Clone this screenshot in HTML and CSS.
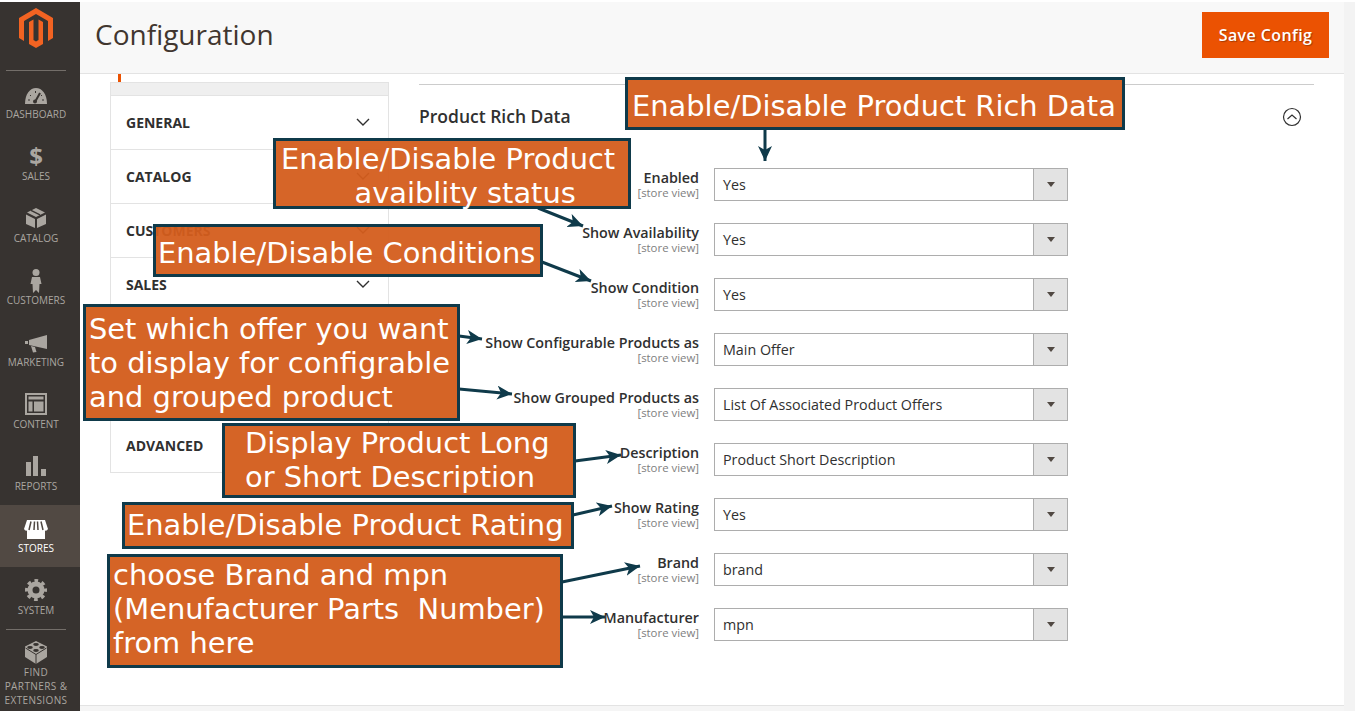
FILE: index.html
```html
<!DOCTYPE html>
<html lang="en">
<head>
<meta charset="utf-8">
<title>Configuration</title>
<link rel="stylesheet" href="styles.css">
</head>
<body>
<div class="page">
  <aside class="sidebar">
    <div class="logo">
      <svg width="36" height="40" viewBox="0 0 36 40"><path fill="#f26322" d="M18 0 35 10V30L30 33V13L18 6 6 13V33L1 30V10Z"/><path fill="#f26322" d="M11 14 15.500 11.500V32L18 33.500 20.500 32V11.500L25 14V36L18 40 11 36Z"/></svg>
    </div>
    <a class="nav-item"><svg class="ico" width="24" height="24" viewBox="0 0 24 24"><path d="M1 21C1 11 6 5 12 5S23 11 23 21Z" fill="currentColor"/><path d="M11 19 16 10" stroke="#373330" stroke-width="2"/><circle cx="11" cy="18.500" r="2" fill="#373330"/><path d="M4 17h2M6 12l1 1M11.500 8v2M18 12l-1 1M20 17h-2" stroke="#373330" stroke-width="1"/></svg><span>Dashboard</span></a>
    <a class="nav-item"><span class="ico dollar">$</span><span>Sales</span></a>
    <a class="nav-item"><svg class="ico" width="24" height="24" viewBox="0 0 24 24"><path d="M12 1 21 5.500 12 10 3 5.500Z" fill="currentColor"/><path d="M7 3.300 16 7.800" stroke="#373330" stroke-width="1.500"/><path d="M2 7.500 11 12V21L2 17ZM22 7.500 13 12V21L22 17Z" fill="currentColor"/></svg><span>Catalog</span></a>
    <a class="nav-item"><svg class="ico" width="24" height="24" viewBox="0 -4 24 24"><circle cx="12" cy="-0.500" r="3.500" fill="currentColor"/><path d="M8 4H16L17.500 11H15.500L15 20 12 17 9 20 8.500 11H6.500Z" fill="currentColor"/></svg><span>Customers</span></a>
    <a class="nav-item"><svg class="ico" width="24" height="24" viewBox="0 0 24 24"><path d="M5 9 23 4V18L5 14Z" fill="currentColor"/><path d="M1 10H4V13H1ZM7 15 11 16 12.500 21 9 21.500Z" fill="currentColor"/></svg><span>Marketing</span></a>
    <a class="nav-item"><svg class="ico" width="24" height="24" viewBox="0 0 24 24"><path fill-rule="evenodd" d="M1 0H23V22H1ZM3 2V20H21V2Z" fill="currentColor"/><path d="M4.500 3.500H19.500V6.500H4.500ZM4.500 8.500H8.500V18.500H4.500ZM10 8.500H19.500V18.500H10Z" fill="currentColor"/></svg><span>Content</span></a>
    <a class="nav-item"><svg class="ico" width="24" height="24" viewBox="0 0 24 24"><path d="M2 7H7V21H2ZM9 1H14V21H9ZM17 14H22V21H17Z" fill="currentColor"/></svg><span>Reports</span></a>
    <a class="nav-item active"><svg class="ico" width="24" height="24" viewBox="0 0 24 24"><path d="M3 12H21V22H3Z" fill="currentColor"/><path d="M3 3H21L24 12Q22.500 15 20 13 18 15 16 13 14 15 12 13 10 15 8 13 6 15 4 13 1.500 15 0 12Z" fill="currentColor"/><path d="M7 4.500 5 13M10.500 4.500 10 13M13.500 4.500 14 13M17 4.500 19 13" stroke="#514943" stroke-width="1.500"/></svg><span>Stores</span></a>
    <a class="nav-item"><svg class="ico" width="24" height="24" viewBox="0 0 24 24"><circle cx="12" cy="11" r="6" fill="none" stroke="currentColor" stroke-width="5"/><circle cx="12" cy="11" r="9.500" fill="none" stroke="currentColor" stroke-width="3" stroke-dasharray="3.700 3.760" stroke-dashoffset="1.850"/></svg><span>System</span></a>
    <a class="nav-item partners"><svg class="ico" width="24" height="24" viewBox="0 0 24 24"><path d="M12 0 23 5.500V16L12 23 1 16V5.500Z" fill="currentColor"/><path d="M1.500 7 12 13.500 22.500 7M12 13.500V23" stroke="#373330" stroke-width="1" fill="none"/><ellipse cx="12" cy="3.500" rx="2.800" ry="1.400" fill="#373330"/><ellipse cx="6" cy="6.500" rx="2.800" ry="1.400" fill="#373330"/><ellipse cx="18" cy="6.500" rx="2.800" ry="1.400" fill="#373330"/><ellipse cx="12" cy="9.500" rx="2.800" ry="1.400" fill="#373330"/></svg><span>Find<br>Partners &amp;<br>Extensions</span></a>
  </aside>

  <main class="main">
    <header class="topbar">
      <h1 class="title">Configuration</h1>
      <button class="save">Save Config</button>
    </header>
    <div class="content">
      <nav class="tabs">
        <div class="tab-mark"></div>
        <div class="tabs-box">
          <div class="tabs-head"></div>
          <div class="tab"><span>General</span><svg class="chev" width="14" height="8" viewBox="0 0 14 8"><path d="M1 1 7 7 13 1"/></svg></div>
          <div class="tab"><span>Catalog</span><svg class="chev" width="14" height="8" viewBox="0 0 14 8"><path d="M1 1 7 7 13 1"/></svg></div>
          <div class="tab"><span>Customers</span><svg class="chev" width="14" height="8" viewBox="0 0 14 8"><path d="M1 1 7 7 13 1"/></svg></div>
          <div class="tab"><span>Sales</span><svg class="chev" width="14" height="8" viewBox="0 0 14 8"><path d="M1 1 7 7 13 1"/></svg></div>
          <div class="tab"></div>
          <div class="tab"></div>
          <div class="tab"><span>Advanced</span></div>
        </div>
      </nav>
      <section class="form">
        <div class="section-head">
          <h2>Product Rich Data</h2>
          <svg width="20" height="20" viewBox="0 0 20 20" class="collapse"><circle cx="10" cy="10" r="8.500"/><path d="M5.500 12 10 8 14.500 12"/></svg>
        </div>
        <div class="row"><div class="lab"><b>Enabled</b><small>[store view]</small></div><div class="sel"><span>Yes</span><i></i></div></div>
        <div class="row"><div class="lab"><b>Show Availability</b><small>[store view]</small></div><div class="sel"><span>Yes</span><i></i></div></div>
        <div class="row"><div class="lab"><b>Show Condition</b><small>[store view]</small></div><div class="sel"><span>Yes</span><i></i></div></div>
        <div class="row"><div class="lab"><b>Show Configurable Products as</b><small>[store view]</small></div><div class="sel"><span>Main Offer</span><i></i></div></div>
        <div class="row"><div class="lab"><b>Show Grouped Products as</b><small>[store view]</small></div><div class="sel"><span>List Of Associated Product Offers</span><i></i></div></div>
        <div class="row"><div class="lab"><b>Description</b><small>[store view]</small></div><div class="sel"><span>Product Short Description</span><i></i></div></div>
        <div class="row"><div class="lab"><b>Show Rating</b><small>[store view]</small></div><div class="sel"><span>Yes</span><i></i></div></div>
        <div class="row"><div class="lab"><b>Brand</b><small>[store view]</small></div><div class="sel"><span>brand</span><i></i></div></div>
        <div class="row"><div class="lab"><b>Manufacturer</b><small>[store view]</small></div><div class="sel"><span>mpn</span><i></i></div></div>
      </section>
    </div>
    <div class="foot"></div>
  </main>
  <div class="gutter"></div>
</div>

<svg class="arrows" width="1359" height="711" viewBox="0 0 1359 711">
  <defs>
    <marker id="h" markerUnits="userSpaceOnUse" markerWidth="18" markerHeight="14" refX="15" refY="7" orient="auto"><path d="M0 0 15 7 0 14 4 7Z" fill="#0f3a4a"/></marker>
  </defs>
  <g stroke="#0f3a4a" stroke-width="3" fill="none">
    <line x1="765" y1="130" x2="765" y2="161" marker-end="url(#h)"/>
    <line x1="538" y1="208" x2="583" y2="226" marker-end="url(#h)"/>
    <line x1="542" y1="262" x2="591" y2="281" marker-end="url(#h)"/>
    <line x1="459" y1="336" x2="482" y2="339" marker-end="url(#h)"/>
    <line x1="459" y1="389" x2="512" y2="394" marker-end="url(#h)"/>
    <line x1="575" y1="461" x2="621" y2="455" marker-end="url(#h)"/>
    <line x1="573" y1="515" x2="612" y2="506" marker-end="url(#h)"/>
    <line x1="562" y1="582" x2="640" y2="566" marker-end="url(#h)"/>
    <line x1="562" y1="617" x2="605" y2="617" marker-end="url(#h)"/>
  </g>
</svg>
<div class="note n1">Enable/Disable Product Rich Data</div>
<div class="note sheer n2">Enable/Disable Product
        avaiblity status</div>
<div class="note sheer n3">Enable/Disable Conditions</div>
<div class="note n4">Set which offer you want
to display for configrable
and grouped product</div>
<div class="note n5">Display Product Long
or Short Description</div>
<div class="note n6">Enable/Disable Product Rating</div>
<div class="note n7">choose Brand and mpn
(Menufacturer Parts  Number)
from here</div>
</body>
</html>
```
FILE: styles.css
```css
* { box-sizing: border-box; }
html, body { margin: 0; height: 100%; }
body { background: #fff; padding: 2px 4px 0 0; font-family: "Open Sans", sans-serif; color: #303030; overflow: hidden; position: relative; }
.page { display: flex; height: 709px; background: #f3f3f3; }

.sidebar { width: 80px; flex: none; background: #373330; color: #aaa6a0; display: flex; flex-direction: column; }
.logo { height: 69px; margin: 0 14px 0 6px; border-bottom: 1px solid #736e69; display: flex; justify-content: center; padding-top: 6px; }
.nav-item { height: 62px; padding: 12px 8px 0 0; display: flex; flex-direction: column; align-items: center; font-size: 10px; line-height: 14px; text-transform: uppercase; text-align: center; flex: none; }
.nav-item .ico { width: 24px; height: 24px; flex: none; display: block; overflow: visible; }
.nav-item.active { background: #514943; color: #fff; }
.dollar { font: 700 24px/22px "Open Sans", sans-serif; text-align: center; }
.partners { border-top: 1px solid #736e69; margin: 0 14px 0 6px; padding: 11px 0 0; height: 82px; letter-spacing: .4px; white-space: nowrap; }

.main { width: 1264px; flex: none; background: #fff; display: flex; flex-direction: column; }
.topbar { height: 72px; flex: none; background: #f8f8f8; border-bottom: 1px solid #e3e3e3; display: flex; align-items: center; justify-content: space-between; padding: 0 15px 7px; }
.title { margin: 0; font-size: 28px; font-weight: 400; color: #41362f; line-height: 1; }
.save { width: 127px; height: 46px; margin-top: 2px; border: 0; background: #eb5202; color: #fff; font: 600 16px "Open Sans", sans-serif; letter-spacing: .4px; text-shadow: 1px 1px 1px rgba(0,0,0,.3); }

.content { flex: 1; display: flex; padding-left: 30px; }
.tabs { width: 279px; flex: none; }
.tab-mark { width: 3px; height: 8px; margin-left: 8px; background: #eb5202; }
.tabs-box { border: 1px solid #e3e3e3; height: 391px; display: flex; flex-direction: column; }
.tabs-head { height: 13px; flex: none; background: #efefef; border-bottom: 1px solid #e3e3e3; }
.tab { height: 54px; flex: none; display: flex; align-items: center; justify-content: space-between; padding: 0 18px 0 15px; font-size: 14px; font-weight: 700; text-transform: uppercase; border-bottom: 1px solid #e3e3e3; }
.tab:last-child { border-bottom: 0; flex: 1; padding-bottom: 2px; }
.chev { fill: none; stroke: #303030; stroke-width: 1.400; margin-top: -2px; }

.form { width: 895px; flex: none; margin-left: 30px; padding-top: 10px; }
.section-head { border-top: 1px solid #ccc; height: 84px; display: flex; justify-content: space-between; padding: 20px 12px 0 0; }
.section-head h2 { margin: 0; font-size: 17.500px; font-weight: 600; line-height: 22px; }
.collapse { fill: none; stroke: #303030; stroke-width: 1.200; margin-top: 2px; }
.row { display: flex; height: 55px; gap: 15px; }
.lab { width: 280px; text-align: right; display: flex; flex-direction: column; padding-top: 1px; }
.lab b { font-size: 14.300px; font-weight: 600; line-height: 17px; }
.lab small { font-size: 11.400px; line-height: 13px; color: #808080; }
.sel { width: 354px; height: 33px; border: 1px solid #adadad; display: flex; align-items: center; justify-content: space-between; font-size: 14.300px; padding-left: 8px; }
.sel i { width: 34px; height: 31px; background: #e3e3e3; border-left: 1px solid #adadad; display: flex; align-items: center; justify-content: center; }
.sel i::after { content: ""; border: 4px solid transparent; border-top: 5px solid #514943; border-bottom: 0; }

.foot { height: 6px; background: #f5f5f5; border-top: 1px solid #e3e3e3; flex: none; }
.gutter { flex: 1; }

.arrows { position: absolute; left: 0; top: 0; pointer-events: none; }
.note { position: absolute; background: #d56426; border: 3px solid #0f3a4a; color: #fff; font-family: "DejaVu Sans", sans-serif; font-size: 28.900px; line-height: 34px; white-space: pre; padding: 8px 5px; }
.sheer { background: rgba(212,93,28,.95); }
.n1 { left: 625px; top: 77px; width: 500px; height: 53px; padding: 9px 0 0 4px; }
.n2 { left: 273px; top: 138px; width: 358px; height: 71px; padding: 1px 5px; }
.n3 { left: 153px; top: 224px; width: 390px; height: 53px; padding: 9px 2px; }
.n4 { left: 83px; top: 304px; width: 377px; height: 117px; padding: 5px 3px; }
.n5 { left: 222px; top: 423px; width: 354px; height: 75px; padding: 0 20px; }
.n6 { left: 122px; top: 502px; width: 452px; height: 47px; padding: 3px 2px; }
.n7 { left: 107px; top: 554px; width: 456px; height: 114px; padding: 1px 3px; }
```
